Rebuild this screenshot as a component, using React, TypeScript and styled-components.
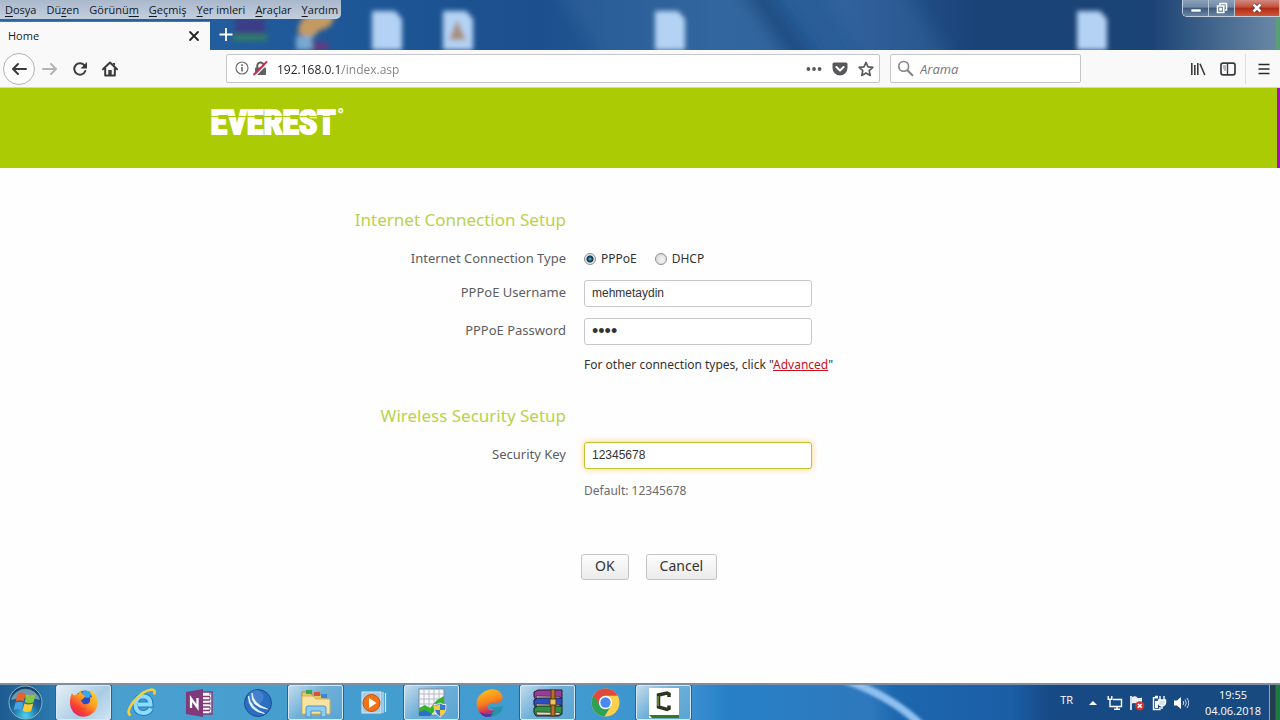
import React from "react";
import styled, { createGlobalStyle, css } from "styled-components";

const ui = `"Open Sans", "Noto Sans", sans-serif`;
const pageFont = `"Noto Sans", "Open Sans", sans-serif`;

const GlobalStyle = createGlobalStyle`
  *, *::before, *::after { box-sizing: border-box; }
  body { margin: 0; background: #fefefe; font-family: ${pageFont}; }
  button, input { font: inherit; margin: 0; }
`;

const Screen = styled.div`
  display: flex;
  flex-direction: column;
  min-height: 100vh;
`;

/* ---------- window frame ---------- */

const Frame = styled.header`
  position: relative;
  display: flex;
  flex-direction: column;
  overflow: hidden;
  background: #1c4f8a;
`;

const Backdrop = styled.svg`
  position: absolute;
  inset: 0;
  width: 100%;
  height: 100%;
`;

const FrameRow = styled.div<{ $end?: boolean }>`
  position: relative;
  display: flex;
  align-items: ${(p) => (p.$end ? "stretch" : "flex-start")};
  justify-content: ${(p) => (p.$end ? "flex-start" : "space-between")};
  height: ${(p) => (p.$end ? "29px" : "21px")};
`;

const MenuBar = styled.nav`
  display: flex;
  gap: 10px;
  height: 19px;
  padding: 0 3px 0 5px;
  border-radius: 0 0 5px 0;
  background: linear-gradient(#aab8cc, #c3cfde);
`;

const MenuItem = styled.button`
  padding: 0;
  border: 0;
  background: none;
  color: #14181f;
  font-family: ${ui};
  font-size: 11px;
  line-height: 17px;
  white-space: nowrap;
  u { text-underline-offset: 2px; }
`;

const WindowButtons = styled.div`
  display: flex;
  height: 17px;
  border: 1px solid #c3cfdc;
  border-width: 0 0 1px 1px;
  border-radius: 0 0 0 5px;
  overflow: hidden;
`;

const WindowButton = styled.button<{ $close?: boolean }>`
  display: grid;
  place-items: center;
  width: ${(p) => (p.$close ? "45px" : "26px")};
  padding: 0;
  border: 0;
  border-right: 1px solid #b9c6d5;
  background: ${(p) =>
    p.$close
      ? "linear-gradient(#d08a80, #c4503c 45%, #b02a14 50%, #d0563a)"
      : "linear-gradient(#8ba0b9, #7189a6 45%, #3d5a7d 50%, #6885a5)"};
`;

const Tab = styled.div`
  display: flex;
  align-items: center;
  justify-content: space-between;
  width: 210px;
  padding: 0 9px 1px 8px;
  background: #f9f9fa;
  border-top: 1px solid #2c7fd0;
  color: #1a1a1c;
  font-family: ${ui};
  font-size: 11px;
`;

const PlainButton = styled.button<{ $w?: number }>`
  display: grid;
  place-items: center;
  width: ${(p) => p.$w ?? 14}px;
  padding: 0;
  border: 0;
  background: none;
`;

/* ---------- toolbar ---------- */

const Toolbar = styled.div`
  display: flex;
  align-items: center;
  height: 38px;
  background: #f9f9fa;
  border-bottom: 1px solid #d5dcae;
`;

const NavGroup = styled.div`
  display: flex;
  align-items: center;
  width: 226px;
  padding-left: 3px;
`;

const BackButton = styled.button`
  display: grid;
  place-items: center;
  width: 32px;
  height: 32px;
  padding: 0;
  border: 1px solid #b4b4b6;
  border-radius: 50%;
  background: #fdfdfd;
`;

const FieldBox = styled.div<{ $search?: boolean }>`
  display: flex;
  align-items: center;
  height: 29px;
  border: 1px solid #c6c6c8;
  border-radius: 2px;
  background: #fff;
  ${(p) =>
    p.$search
      ? css`
          width: 191px;
          margin-left: 10px;
          padding-left: 6px;
          gap: 6px;
        `
      : css`
          flex: 1;
          min-width: 0;
          padding-left: 8px;
        `}
`;

const SiteInfo = styled.span`
  display: flex;
  gap: 4px;
`;

const AddressInput = styled.input`
  flex: 1;
  min-width: 0;
  margin-left: 9px;
  padding: 2px 0 0;
  border: 0;
  outline: 0;
  font-family: ${ui};
  font-size: 12px;
  line-height: 20px;
  color: transparent;
  background: linear-gradient(90deg, #202023 65px, #808083 65px);
  background-clip: text;
  -webkit-background-clip: text;
`;

const SearchInput = styled.input`
  flex: 1;
  min-width: 0;
  padding: 0;
  border: 0;
  outline: 0;
  background: none;
  font-family: ${ui};
  font-size: 13px;
  &::placeholder { color: #77777a; font-style: italic; opacity: 1; }
`;

const ToolGroup = styled.div`
  display: flex;
  align-items: center;
  justify-content: flex-end;
  width: 199px;
  height: 100%;
`;

const Separator = styled.span`
  width: 1px;
  height: 30px;
  margin: 0 2px;
  background: #dededf;
`;

/* ---------- router page ---------- */

const Banner = styled.div`
  height: 80px;
  background: #abcb05;
  border-right: 3px solid #a80cc4;
`;

const Container = styled.div`
  width: 100%;
  max-width: 860px;
  margin: 0 auto;
`;

const Brand = styled.div`
  display: flex;
  gap: 2px;
  width: max-content;
  padding: 14px 0 0 2px;
  color: #fff;
`;

const BrandName = styled.span`
  position: relative;
  font-family: "Roboto Condensed", "Open Sans Condensed", "Noto Sans Condensed", "Open Sans", sans-serif;
  font-size: 34px;
  font-weight: 700;
  line-height: 40px;
  -webkit-text-stroke: 2px #fff;
  &::after {
    content: "";
    position: absolute;
    left: 0;
    right: 0;
    top: 14px;
    height: 1px;
    background: #abcb05;
  }
`;

const BrandMark = styled.span`
  font-size: 14px;
  font-weight: 700;
  line-height: 24px;
`;

const Main = styled.main`
  flex: 1;
  padding: 38px 0 40px;
`;

const Form = styled.form`
  display: flex;
  flex-direction: column;
  gap: 28px;
`;

const Section = styled.section`
  display: flex;
  flex-direction: column;
  gap: 12px;
`;

const SectionTitle = styled.h2`
  width: 356px;
  margin: 0;
  color: #b9d24a;
  font-size: 17px;
  font-weight: 400;
  line-height: 28px;
  text-align: right;
`;

const Row = styled.div<{ $h?: number }>`
  display: grid;
  grid-template-columns: 356px 1fr;
  column-gap: 18px;
  align-items: start;
  height: ${(p) => p.$h ?? 26}px;
`;

const Label = styled.label`
  color: #5d5d5f;
  font-size: 13px;
  line-height: 24px;
  text-align: right;
`;

const TextInput = styled.input`
  width: 228px;
  height: 27px;
  padding: 0 7px 1px;
  border: 1px solid #c8c8c8;
  border-radius: 3px;
  background: #fff;
  outline: 0;
  color: #333;
  font-family: "Liberation Sans", Arial, sans-serif;
  font-size: 12px;
  &[type="password"] { font-size: 18px; }
`;

const KeyInput = styled(TextInput)`
  border-color: #bfc530;
  box-shadow: 0 0 6px #ffcf70;
`;

const RadioGroup = styled.div`
  display: flex;
  gap: 18px;
`;

const RadioLabel = styled.label`
  display: flex;
  align-items: center;
  gap: 5px;
  color: #333;
  font-size: 12px;
  line-height: 26px;
`;

const Radio = styled.input`
  appearance: none;
  width: 12px;
  height: 12px;
  border: 1px solid #8e8f8f;
  border-radius: 50%;
  background: radial-gradient(circle at 60% 60%, #f4f4f4, #cfd1d3);
  &:checked {
    background: radial-gradient(circle at 50% 50%, #6fc4e8 0, #14506f 2px, #0c3247 3px, #e4e6e8 4px);
  }
`;

const Note = styled.p<{ $muted?: boolean }>`
  grid-column: 2;
  margin: 0;
  color: ${(p) => (p.$muted ? "#6b6b6d" : "#333")};
  font-size: 12px;
  line-height: ${(p) => (p.$muted ? "22px" : "18px")};
  white-space: nowrap;
`;

const NoteLink = styled.a`
  color: #c8101c;
`;

const Actions = styled.div`
  display: flex;
  gap: 17px;
  padding: 28px 0 0 371px;
`;

const ActionButton = styled.button`
  height: 26px;
  padding: 0 13px 2px;
  border: 1px solid #c4c4c4;
  border-radius: 3px;
  background: linear-gradient(#fdfdfd, #ebebeb);
  color: #333;
  font-size: 14px;
  line-height: 22px;
`;

/* ---------- taskbar ---------- */

const Taskbar = styled.footer`
  position: relative;
  display: flex;
  height: 37px;
  overflow: hidden;
  border-top: 2px solid #7f8fa1;
  background: #1a5fa6;
`;

const StartButton = styled(PlainButton)`
  position: relative;
  width: 56px;
  padding-right: 6px;
`;

const Tasks = styled.div`
  position: relative;
  display: flex;
  flex: 1;
  gap: 3px;
`;

const Task = styled.button<{ $state?: "open" | "active" }>`
  display: grid;
  place-items: center;
  width: 55px;
  padding: 0;
  border: 1px solid transparent;
  background: none;
  ${(p) =>
    p.$state &&
    css`
      border-color: #d5e8f4;
      border-radius: 2px;
      box-shadow: 0 0 0 1px #35607f;
      background: ${p.$state === "active"
        ? "linear-gradient(135deg, #e6eff6, #a9cde4 60%, #cfe4f2)"
        : "linear-gradient(135deg, #c3dcec, #6fb0d8 45%, #5aa5d4)"};
    `}
`;

const Tray = styled.div`
  position: relative;
  display: flex;
  align-items: center;
  gap: 6px;
  color: #fff;
  font-family: ${ui};
  font-size: 11px;
  line-height: 16px;
`;

const Language = styled.span`
  align-self: flex-start;
  padding: 7px 6px 0 0;
`;

const Clock = styled.div`
  width: 62px;
  margin-left: 7px;
  text-align: center;
`;

const ShowDesktop = styled.button`
  align-self: stretch;
  width: 11px;
  margin-left: -1px;
  padding: 0;
  border: 0;
  border-left: 1px solid #8fa8c4;
  background: linear-gradient(90deg, #243c50 5px, #1f7a42 6px);
`;

/* ---------- drawings ---------- */

const Doc = ({ x }: { x: number }) => (
  <path d={`M${x} 11h23l7 8v31h-30z`} fill="#b4d3f4" />
);

const FrameBackdrop = () => (
  <Backdrop viewBox="0 0 1280 50" preserveAspectRatio="xMinYMin slice" aria-hidden="true">
    <defs>
      <linearGradient id="sky" x1="0" x2="1">
        <stop offset="0" stopColor="#2a67a8" />
        <stop offset=".3" stopColor="#1d5595" />
        <stop offset=".42" stopColor="#1c4f8d" />
        <stop offset=".56" stopColor="#2c6199" />
        <stop offset=".66" stopColor="#2a5d98" />
        <stop offset=".76" stopColor="#1a4379" />
        <stop offset=".9" stopColor="#1b4375" />
        <stop offset="1" stopColor="#6b8aa6" />
      </linearGradient>
      <filter id="soft" x="-20%" y="-20%" width="140%" height="140%">
        <feGaussianBlur stdDeviation="2.5" />
      </filter>
      <filter id="haze" x="-20%" y="-50%" width="140%" height="200%">
        <feGaussianBlur stdDeviation="8" />
      </filter>
    </defs>
    <rect width="1280" height="50" fill="url(#sky)" />
    <g filter="url(#haze)">
      <path d="M550 -20h180l80 90H610z" fill="#386ca5" opacity=".35" />
      <path d="M735 -20h25l65 90h-30z" fill="#123f74" opacity=".6" />
      <path d="M815 -20h80l65 90H870z" fill="#3a6ba2" opacity=".35" />
    </g>
    <g filter="url(#soft)">
      <Doc x={372} />
      <Doc x={443} />
      <path d="M457 20l9 20h-17z" fill="#a98d78" />
      <Doc x={655} />
      <Doc x={1077} />
      <path d="M235 18h30v16h-30z" fill="#3a3c86" />
      <path d="M233 34h34v7h-34z" fill="#2f7c68" />
      <path d="M298 34q0-20 18-20h18q0 14-14 16l-8 8z" fill="#c49a63" />
      <path d="M296 36h16v14h-16z" fill="#7aa8d0" />
      <path d="M312 42h16v8h-16z" fill="#623a80" />
    </g>
    <path d="M1276 18h4v32h-4z" fill="#5aa077" />
  </Backdrop>
);

const TaskBackdrop = () => (
  <Backdrop viewBox="0 0 1280 36" preserveAspectRatio="none" aria-hidden="true">
    <defs>
      <linearGradient id="bar" x1="0" x2="1">
        <stop offset="0" stopColor="#1d5c90" />
        <stop offset=".04" stopColor="#2b78ad" />
        <stop offset=".09" stopColor="#49a0cf" />
        <stop offset=".45" stopColor="#419bd0" />
        <stop offset=".54" stopColor="#3a8fd0" />
        <stop offset=".57" stopColor="#2780c6" />
        <stop offset=".68" stopColor="#2f78bd" />
        <stop offset=".7" stopColor="#1d67af" />
        <stop offset=".79" stopColor="#1a5ea6" />
        <stop offset=".82" stopColor="#174a85" />
        <stop offset="1" stopColor="#184a80" />
      </linearGradient>
      <filter id="glow"><feGaussianBlur stdDeviation="1.5" /></filter>
    </defs>
    <rect width="1280" height="36" fill="url(#bar)" />
    <path d="M842 -6Q890 10 922 42" fill="none" stroke="#8fc0f0" strokeWidth="8" filter="url(#glow)" />
  </Backdrop>
);

const ink = { fill: "none", stroke: "#3b3b3e", strokeWidth: 2 } as const;

const Arrow = ({ flip, color = "#3b3b3e" }: { flip?: boolean; color?: string }) => (
  <svg width="16" height="16" viewBox="0 0 16 16" fill="none" stroke={color} strokeWidth="2" strokeLinecap="round" strokeLinejoin="round">
    {flip ? <path d="M1 8h13M9 3l5 5-5 5" /> : <path d="M15 8H2M7 3L2 8l5 5" />}
  </svg>
);

const Reload = () => (
  <svg width="16" height="16" viewBox="0 0 16 16">
    <path d="M12.6 4.6A5.7 5.7 0 1 0 13.3 10" {...ink} strokeLinecap="round" />
    <path d="M15 1v6.4H8.6z" fill="#3b3b3e" />
  </svg>
);

const Home = () => (
  <svg width="16" height="16" viewBox="0 0 16 16">
    <path d="M1 8.2L8 1.5l7 6.7M3.2 7v7.5h9.6V7" {...ink} strokeLinecap="round" strokeLinejoin="round" />
    <path d="M6.3 14V9h3.4v5z" fill="#3b3b3e" />
    <path d="M11 2h2v3l-2-2z" fill="#3b3b3e" />
  </svg>
);

const Info = () => (
  <svg width="14" height="14" viewBox="0 0 14 14">
    <circle cx="7" cy="7" r="6" fill="none" stroke="#6a6a6d" strokeWidth="1.1" />
    <path d="M6.2 6h1.6v4.6H6.2zM6.2 3.2h1.6v1.7H6.2z" fill="#6a6a6d" />
  </svg>
);

const Insecure = () => (
  <svg width="15" height="15" viewBox="0 0 15 15">
    <path d="M4.3 7V4.6a3.2 3.2 0 0 1 6.4 0V7" fill="none" stroke="#606063" strokeWidth="2" />
    <rect x="2" y="6.5" width="11" height="7.5" rx="1" fill="#606063" />
    <path d="M2 15L14.500 2.500" stroke="#fff" strokeWidth="1.500" />
    <path d="M1 13.5L13.5 1" stroke="#d7264f" strokeWidth="1.8" strokeLinecap="round" />
  </svg>
);

const Dots = () => (
  <svg width="16" height="16" viewBox="0 0 16 16" fill="#58585b">
    <circle cx="2.4" cy="8" r="1.900" /><circle cx="8" cy="8" r="1.900" /><circle cx="13.6" cy="8" r="1.900" />
  </svg>
);

const Pocket = () => (
  <svg width="16" height="16" viewBox="0 0 16 16">
    <path d="M2 1.5h12a1.5 1.5 0 0 1 1.5 1.5v4a7.5 7.5 0 0 1-15 0V3A1.5 1.5 0 0 1 2 1.5z" fill="#58585b" />
    <path d="M4.4 6L8 9.4 11.6 6" fill="none" stroke="#fff" strokeWidth="2" strokeLinecap="round" strokeLinejoin="round" />
  </svg>
);

const Star = () => (
  <svg width="16" height="16" viewBox="0 0 16 16">
    <path d="M8 1.4l2 4.5 4.9.5-3.7 3.3 1.1 4.8L8 12l-4.3 2.5 1.1-4.8L1.1 6.4 6 5.9z" fill="none" stroke="#58585b" strokeWidth="1.6" strokeLinejoin="round" />
  </svg>
);

const Magnifier = () => (
  <svg width="17" height="17" viewBox="0 0 17 17" fill="none" stroke="#838386">
    <circle cx="6.7" cy="6.4" r="4.9" strokeWidth="1.6" />
    <path d="M10.4 10.2l5 5" strokeWidth="2" strokeLinecap="round" />
  </svg>
);

const Library = () => (
  <svg width="16" height="16" viewBox="0 0 16 16" {...ink} strokeWidth={1.6}>
    <path d="M1.800 2v12M4.800 4v10M7.800 2v12M10 2.800L14.800 14" />
  </svg>
);

const Sidebar = () => (
  <svg width="16" height="16" viewBox="0 0 16 16">
    <rect x="1" y="2.2" width="14" height="11.6" rx="2" {...ink} strokeWidth={1.7} />
    <path d="M7.5 2.5v11" stroke="#3b3b3e" strokeWidth="1.4" />
    <path d="M3 5h3M3 7h3M4 9h2" stroke="#77777a" strokeWidth="1" />
  </svg>
);

const Burger = () => (
  <svg width="16" height="16" viewBox="0 0 16 16" stroke="#2b2b2e" strokeWidth="1.7">
    <path d="M2.500 3.500h11M2.500 8h11M2.500 12.500h11" />
  </svg>
);

const StartOrb = () => (
  <svg width="35" height="35" viewBox="0 0 35 35" aria-hidden="true">
    <defs>
      <radialGradient id="orb" cx=".5" cy=".9" r=".9">
        <stop offset="0" stopColor="#47d4f4" />
        <stop offset=".45" stopColor="#1d6c9e" />
        <stop offset="1" stopColor="#123c63" />
      </radialGradient>
    </defs>
    <circle cx="17.5" cy="17.5" r="16.5" fill="url(#orb)" stroke="#88b4cc" />
    <path d="M3 15a15 15 0 0 1 29 0q-14-5-29 0z" fill="#c3dbe6" opacity=".5" />
    <path d="M9.500 8.500q4-2 8 0l-1.800 8q-4-2-8 0z" fill="#e8622a" />
    <path d="M18.500 9.300q4 2 9 0l-2 8q-4 2-8.800 0z" fill="#8cc63f" />
    <path d="M7.400 17.700q4-2 8 0l-1.800 7.500q-4-2-8 0z" fill="#47a3e4" />
    <path d="M16.400 18.400q4 2 8.800 0l-2 7.500q-4 2-8.600 0z" fill="#fbc932" />
  </svg>
);

const Firefox = () => (
  <svg width="30" height="30" viewBox="0 0 30 30">
    <defs>
      <linearGradient id="fox" x1="1" y1="0" x2=".2" y2="1">
        <stop offset="0" stopColor="#ffe23a" />
        <stop offset=".45" stopColor="#ff9a1f" />
        <stop offset=".8" stopColor="#f8353f" />
        <stop offset="1" stopColor="#d9257c" />
      </linearGradient>
    </defs>
    <circle cx="16" cy="12" r="9.5" fill="#2b4bc4" />
    <path d="M13 4q6-3 10 1l-3 5-6-1z" fill="#39a7f0" />
    <path d="M3 5q1 2 2 2.500q3-2 5-1.500Q9.500 3.500 12 2q0 4 4 6-1 3-4 4 1 5 6 4 4-1 3-7 1 0 1.800 1Q23 6 19.500 2q6 1.500 8 7Q30 17 26 23q-5 6-12 5.700Q5 28 2 20-.5 12 3 5z" fill="url(#fox)" />
    <path d="M9 16q3 6 9 4-4 5-9 2-3-3 0-6z" fill="#f2451f" opacity=".65" />
  </svg>
);

const Explorer = () => (
  <svg width="30" height="30" viewBox="0 0 30 30" fill="none">
    <path d="M24 20.500Q21.500 25 16 25 8.500 24.500 8.500 16.500 9 8.500 16 8.200 23.500 8.500 23.500 16.500H11" stroke="#1a7ec6" strokeWidth="6" />
    <path d="M24 20.500Q21.500 25 16 25 8.500 24.500 8.500 16.500 9 8.500 16 8.200 23.500 8.500 23.500 16.500H11" stroke="#8fdcfa" strokeWidth="4" />
    <path d="M3.500 27.500Q-1.500 24.500 7 13 16 2.500 24.500 1.500q4.500 0 2.500 5" stroke="#f4cf3c" strokeWidth="2.600" />
  </svg>
);

const OneNote = () => (
  <svg width="30" height="30" viewBox="0 0 30 30">
    <rect x="14" y="4" width="13" height="22" fill="#fff" stroke="#80397b" strokeWidth="1.500" />
    <path d="M18 8.500h7M18 12h7M18 15.500h7M18 19h7M18 22.500h7" stroke="#80397b" strokeWidth="1.300" />
    <path d="M25 4v22" stroke="#80397b" strokeDasharray="3 2" />
    <path d="M1 4l17-3v28L1 26z" fill="#80397b" />
    <path d="M6 20v-9.500l6.500 9v-9.500" fill="none" stroke="#fff" strokeWidth="2.300" />
  </svg>
);

const Waves = () => (
  <svg width="30" height="30" viewBox="0 0 30 30">
    <circle cx="15" cy="15" r="13.500" fill="#2b6fc2" stroke="#1b4c93" />
    <circle cx="13" cy="9.500" r="7.500" fill="#6ea5e0" opacity=".35" />
    <path d="M9 5q1 11 15.500 16-17-2-15.500-16zM5.500 8q2 12 16 17.500Q5 23 5.500 8z" fill="#eef6fd" stroke="#eef6fd" strokeWidth=".8" strokeLinejoin="round" />
  </svg>
);

const Folder = () => (
  <svg width="32" height="30" viewBox="0 0 32 30">
    <path d="M2 4h8l2 3h12v19H2z" fill="#e8c768" stroke="#b28f3a" />
    <path d="M6 2h6v4H6z" fill="#3aa356" /><path d="M14 4h6v4h-6z" fill="#d9542f" /><path d="M21 6h6v4h-6z" fill="#3b86d0" />
    <path d="M2 8h11l3 3h14v15H2z" fill="#f8e4a0" stroke="#cfb061" />
    <path d="M6 29v-9q0-2 2-2h16q2 0 2 2v9h-5v-6H11v6z" fill="#8bcdf0" stroke="#4d94c2" />
  </svg>
);

const Player = () => (
  <svg width="26" height="26" viewBox="0 0 26 26">
    <rect x="1" y="2" width="19" height="21" fill="#a8cce6" stroke="#d8ebf7" />
    <path d="M22 2v21M24.500 3v19" stroke="#d3e9f8" strokeWidth="1.200" />
    <circle cx="10.500" cy="13" r="8.500" fill="#f07318" stroke="#c6520a" />
    <path d="M8 8l7.500 5-7.500 5z" fill="#fff" />
  </svg>
);

const Monitor = () => (
  <svg width="30" height="30" viewBox="0 0 30 30">
    <rect x="2" y="1" width="25" height="26" fill="#f7f9fc" stroke="#7f8aa0" />
    <path d="M7 1v26M12 1v26M17 1v26M22 1v26M2 6h25M2 11h25M2 16h25" stroke="#b5bccb" />
    <path d="M2 20l6-3 5 3 7-8 7-4v8l-7 4-6 7H2z" fill="#36b52c" />
    <path d="M2 24l6-2 7 4-2 2H2z" fill="#2b6fd0" />
    <path d="M23 15q3 2 6 1.500Q29.500 25 23 29q-6.500-4-6-12.500 3 .5 6-1.500z" fill="#3a78cf" stroke="#dfe7ef" />
    <path d="M23 16v6h-5.500q-.5-3-.5-4.500 3 .5 6-1.500zM23 22h5.500q-1 4-5.500 6z" fill="#f6cf37" />
  </svg>
);

const Blob = () => (
  <svg width="30" height="30" viewBox="0 0 30 30">
    <defs>
      <linearGradient id="blob" x1=".2" y1="0" x2=".5" y2="1">
        <stop offset="0" stopColor="#fdc51d" /><stop offset=".5" stopColor="#f8801e" />
        <stop offset=".75" stopColor="#d73a52" /><stop offset="1" stopColor="#6c2b9b" />
      </linearGradient>
    </defs>
    <path d="M4 8Q12-1 22 2q6 3 5.500 9-1 3-6 4-8-1-9 4 2 5 7 3 2 5-4 7Q4 29 2.500 20 0 13 4 8z" fill="url(#blob)" />
    <path d="M15 19q6 1 13-1-1 9-12 10.500Q8 29 7 26q8 1 14-4-3 1-6-3z" fill="#2593a8" />
    <path d="M5 24q6 4 13 1-2 4-7 4-4-1-6-5z" fill="#5b2ba0" />
  </svg>
);

const Books = () => (
  <svg width="32" height="28" viewBox="0 0 32 28">
    {["#9a3aa0", "#2c4ec4", "#2d9140"].map((c, i) => (
      <g key={c} transform={`translate(0 ${i * 8})`}>
        <path d="M2 3l4-2h24v8l-3 2H4q-3-3-2-8z" fill={c} stroke="#241c22" />
        <path d="M4 7l24 .5v2.500H5z" fill="#e6dcc6" stroke="#33291f" strokeWidth=".7" />
      </g>
    ))}
    <path d="M19 0h4v27h-4z" fill="#b4712c" stroke="#5d3512" />
    <rect x="18" y="10" width="6" height="6" fill="#ecc65b" stroke="#5d3512" />
  </svg>
);

const Chrome = () => (
  <svg width="29" height="29" viewBox="0 0 28 28">
    <circle cx="14" cy="14" r="13.500" fill="#fcd04a" />
    <path d="M2.300 7.200A13.500 13.500 0 0 0 13 27.400L19.500 17 14 14z" fill="#2fa155" />
    <path d="M2.300 7.200A13.500 13.500 0 0 1 25.700 7.500H14a6.500 6.500 0 0 0-6 8.500z" fill="#de4b3c" />
    <circle cx="14" cy="14" r="6.400" fill="#fff" />
    <circle cx="14" cy="14" r="5" fill="#4a87ee" />
  </svg>
);

const Camtasia = () => (
  <svg width="30" height="30" viewBox="0 0 30 30">
    <path d="M0 0h30v30H0z" fill="#fdfefd" />
    <path d="M0 27h30v3H3z" fill="#3f7420" />
    <path d="M20 9V6l-2-1-8.500 2v12l8.500 2.500 2-1v-3" fill="none" stroke="#2b3620" strokeWidth="3.500" />
    <path d="M9 8v10" stroke="#6c9b35" strokeWidth="1.500" />
  </svg>
);

const Network = () => (
  <svg width="16" height="16" viewBox="0 0 16 16" fill="none" stroke="#fff" strokeWidth="1.400">
    <path d="M6 4.500h8.500v7H5.500M10 11.500V14M7 14.300h6M3 6v5.500h2.500M1.200 1v3.200h3.600V1M3 4.200V7" />
  </svg>
);

const Flag = () => (
  <svg width="16" height="16" viewBox="0 0 16 16">
    <path d="M2 1v14" stroke="#fff" strokeWidth="1.600" />
    <path d="M3 2q4-1.500 5 .5 2 1 5 0v7q-4 1-5-.5-2-1.500-5-.500z" fill="#e8eef5" />
    <circle cx="10.800" cy="10.800" r="4.600" fill="#d3342c" />
    <path d="M9 9l3.600 3.600M12.600 9L9 12.600" stroke="#fff" strokeWidth="1.500" />
  </svg>
);

const Battery = () => (
  <svg width="16" height="16" viewBox="0 0 16 16" fill="none" stroke="#fff" strokeWidth="1.400">
    <path d="M7 2.700H2.500v11.800H9V12M4 1.500h3" />
    <path d="M4 6v7h3V6z" fill="#fff" stroke="none" />
    <path d="M7.500 5h7v2.500q0 3-3.500 3.500-3.500-.5-3.500-3.500zM11 11v3" fill="#d7e2ee" />
    <path d="M9 1v4M13 1v4" />
  </svg>
);

const Speaker = () => (
  <svg width="16" height="16" viewBox="0 0 16 16">
    <path d="M1 5.500h3L8 2v12l-4-3.500H1z" fill="#fff" />
    <path d="M10 6q1.500 2 0 4M12 4.500q2.500 3.500 0 7M14 3q3.500 5 0 10" fill="none" stroke="#c7d8ea" />
  </svg>
);

/* ---------- content ---------- */

const menus: [string, string, string][] = [
  ["", "D", "osya"],
  ["Dü", "z", "en"],
  ["Görünü", "m", ""],
  ["", "G", "eçmiş"],
  ["", "Y", "er imleri"],
  ["", "A", "raçlar"],
  ["", "Y", "ardım"],
];

const tasks: { name: string; Icon: React.FC; state?: "open" | "active" }[] = [
  { name: "Firefox", Icon: Firefox, state: "active" },
  { name: "Internet Explorer", Icon: Explorer },
  { name: "OneNote", Icon: OneNote },
  { name: "Network tool", Icon: Waves },
  { name: "File Explorer", Icon: Folder, state: "open" },
  { name: "Media Player", Icon: Player },
  { name: "Resource Monitor", Icon: Monitor, state: "open" },
  { name: "Video tool", Icon: Blob },
  { name: "WinRAR", Icon: Books, state: "open" },
  { name: "Chrome", Icon: Chrome },
  { name: "Camtasia", Icon: Camtasia, state: "open" },
];

export default function App() {
  return (
    <Screen>
      <GlobalStyle />
      <Frame>
        <FrameBackdrop />
        <FrameRow>
          <MenuBar>
            {menus.map(([before, key, after]) => (
              <MenuItem key={before + key + after} type="button">
                {before}<u>{key}</u>{after}
              </MenuItem>
            ))}
          </MenuBar>
          <WindowButtons>
            <WindowButton type="button" aria-label="Minimize">
              <svg width="12" height="12" viewBox="0 0 12 12"><path d="M1 7h10v3H1z" fill="#fff" stroke="#4a5a70" strokeWidth=".6" /></svg>
            </WindowButton>
            <WindowButton type="button" aria-label="Restore">
              <svg width="12" height="12" viewBox="0 0 12 12" fill="none" stroke="#fff" strokeWidth="1.600"><path d="M4 3V1.500h6.500V8H9M1.500 4h6.300v6.500H1.500zM4 6.500h1.500v1.500H4z" /></svg>
            </WindowButton>
            <WindowButton type="button" aria-label="Close window" $close>
              <svg width="12" height="12" viewBox="0 0 12 12"><path d="M2.500 2.500l7 7M9.500 2.500l-7 7" stroke="#5b2a26" strokeWidth="4" /><path d="M2.500 2.500l7 7M9.500 2.500l-7 7" stroke="#fff" strokeWidth="2.600" /></svg>
            </WindowButton>
          </WindowButtons>
        </FrameRow>
        <FrameRow $end>
          <Tab>
            Home
            <PlainButton type="button" aria-label="Close tab">
              <svg width="14" height="14" viewBox="0 0 14 14"><path d="M3 3l8 8M11 3l-8 8" stroke="#222225" strokeWidth="1.800" strokeLinecap="round" /></svg>
            </PlainButton>
          </Tab>
          <PlainButton type="button" aria-label="New tab" $w={32}>
            <svg width="14" height="18" viewBox="0 0 14 18"><path d="M7 1v13M.5 7.500h13" stroke="#fff" strokeWidth="1.800" /></svg>
          </PlainButton>
        </FrameRow>
      </Frame>

      <Toolbar>
        <NavGroup>
          <BackButton type="button" aria-label="Back"><Arrow /></BackButton>
          <PlainButton type="button" aria-label="Forward" $w={30}><Arrow flip color="#b4b4b7" /></PlainButton>
          <PlainButton type="button" aria-label="Reload" $w={30}><Reload /></PlainButton>
          <PlainButton type="button" aria-label="Home page" $w={30}><Home /></PlainButton>
        </NavGroup>
        <FieldBox>
          <SiteInfo>
            <Info />
            <Insecure />
          </SiteInfo>
          <AddressInput aria-label="Address" defaultValue="192.168.0.1/index.asp" />
          <PlainButton type="button" aria-label="Page actions" $w={26}><Dots /></PlainButton>
          <PlainButton type="button" aria-label="Save to Pocket" $w={26}><Pocket /></PlainButton>
          <PlainButton type="button" aria-label="Bookmark" $w={26}><Star /></PlainButton>
        </FieldBox>
        <FieldBox $search>
          <Magnifier />
          <SearchInput aria-label="Search" placeholder="Arama" />
        </FieldBox>
        <ToolGroup>
          <PlainButton type="button" aria-label="Library" $w={30}><Library /></PlainButton>
          <PlainButton type="button" aria-label="Sidebar" $w={30}><Sidebar /></PlainButton>
          <Separator />
          <PlainButton type="button" aria-label="Menu" $w={32}><Burger /></PlainButton>
        </ToolGroup>
      </Toolbar>

      <Banner>
        <Container>
          <Brand>
            <BrandName>EVEREST</BrandName>
            <BrandMark>°</BrandMark>
          </Brand>
        </Container>
      </Banner>

      <Main>
        <Container>
          <Form onSubmit={(e) => e.preventDefault()}>
            <Section>
              <SectionTitle>Internet Connection Setup</SectionTitle>
              <Row $h={22}>
                <Label as="span" id="type-label">Internet Connection Type</Label>
                <RadioGroup role="radiogroup" aria-labelledby="type-label">
                  <RadioLabel><Radio type="radio" name="type" defaultChecked />PPPoE</RadioLabel>
                  <RadioLabel><Radio type="radio" name="type" />DHCP</RadioLabel>
                </RadioGroup>
              </Row>
              <Row>
                <Label htmlFor="username">PPPoE Username</Label>
                <TextInput id="username" defaultValue="mehmetaydin" />
              </Row>
              <Row>
                <Label htmlFor="password">PPPoE Password</Label>
                <TextInput id="password" type="password" defaultValue="1234" />
              </Row>
              <Row $h={18}>
                <Note>For other connection types, click "<NoteLink href="#advanced">Advanced</NoteLink>"</Note>
              </Row>
            </Section>
            <Section>
              <SectionTitle>Wireless Security Setup</SectionTitle>
              <Row>
                <Label htmlFor="key">Security Key</Label>
                <KeyInput id="key" defaultValue="12345678" />
              </Row>
              <Row $h={18}>
                <Note $muted>Default: 12345678</Note>
              </Row>
            </Section>
            <Actions>
              <ActionButton type="submit">OK</ActionButton>
              <ActionButton type="button">Cancel</ActionButton>
            </Actions>
          </Form>
        </Container>
      </Main>

      <Taskbar>
        <TaskBackdrop />
        <StartButton type="button" aria-label="Start"><StartOrb /></StartButton>
        <Tasks>
          {tasks.map(({ name, Icon, state }) => (
            <Task key={name} type="button" aria-label={name} $state={state}><Icon /></Task>
          ))}
        </Tasks>
        <Tray>
          <Language>TR</Language>
          <svg width="16" height="16" viewBox="0 0 16 16"><path d="M4 10l4-4 4 4z" fill="#fff" /></svg>
          <Network />
          <Flag />
          <Battery />
          <Speaker />
          <Clock>
            <div>19:55</div>
            <div>04.06.2018</div>
          </Clock>
          <ShowDesktop type="button" aria-label="Show desktop" />
        </Tray>
      </Taskbar>
    </Screen>
  );
}
